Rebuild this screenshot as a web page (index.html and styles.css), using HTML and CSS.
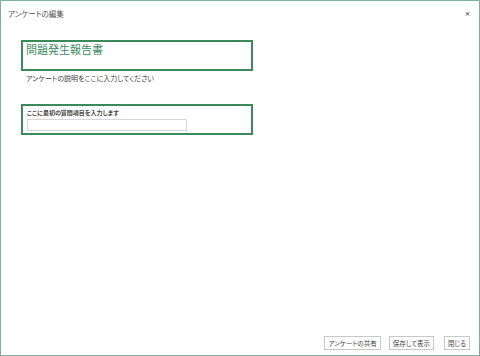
FILE: index.html
```html
<!DOCTYPE html>
<html lang="ja">

<head>
  <meta charset="UTF-8" />
  <title>アンケートの編集</title>
  <link rel="stylesheet" href="styles.css">
</head>

<body>
  <div class="dialog">
    <div class="titlebar">
      <span class="title">アンケートの編集</span>
      <span class="close">&#x2715;</span>
    </div>

    <div class="content">
      <div class="survey-title">問題発生報告書</div>
      <div class="survey-desc">アンケートの説明をここに入力してください</div>

      <div class="question">
        <div class="question-label">ここに最初の質問項目を入力します</div>
        <div class="question-input"></div>
      </div>
    </div>

    <div class="footer">
      <button class="btn">アンケートの共有</button>
      <button class="btn">保存して表示</button>
      <button class="btn">閉じる</button>
    </div>
  </div>
</body>

</html>
```

FILE: styles.css
```css
html, body {
  margin: 0;
  height: 100%;
}

body {
  font-family: "Noto Sans CJK JP", "Noto Sans", sans-serif;
  font-feature-settings: "palt";
  color: #444;
  background: #fff;
}

.dialog {
  box-sizing: border-box;
  width: 480px;
  height: 356px;
  border: 1px solid #7db39a;
  display: flex;
  flex-direction: column;
}

.titlebar {
  display: flex;
  justify-content: space-between;
  align-items: center;
  padding: 5px 9px 0 7px;
  height: 14px;
}

.title {
  font-size: 7.5px;
  color: #555;
}

.close {
  font-size: 6px;
  color: #666;
  font-weight: bold;
}

.content {
  flex: 1;
  padding: 20px 0 0 20px;
}

.survey-title {
  width: 225px;
  height: 27px;
  border: 2px solid #3a8a5c;
  padding: 0 0 0 3px;
  font-size: 11px;
  line-height: 15px;
  color: #3e8b5e;
}

.survey-desc {
  font-size: 7px;
  color: #444;
  padding: 2px 0 0 5px;
  line-height: 10px;
}

.question {
  margin-top: 21px;
  width: 224px;
  height: 27px;
  border: 2px solid #3a8a5c;
  padding: 0 0 0 4px;
}

.question-label {
  font-size: 6px;
  font-weight: bold;
  color: #444;
  line-height: 9px;
  padding-top: 2px;
}

.question-input {
  margin-top: 2px;
  width: 158px;
  height: 10px;
  border: 1px solid #d6d6d6;
}

.footer {
  display: flex;
  justify-content: flex-end;
  align-items: flex-end;
  gap: 8px;
  padding: 0 9px 5px 0;
}

.btn {
  font-family: inherit;
  font-feature-settings: "palt";
  font-size: 6.5px;
  color: #444;
  background: #fff;
  border: 1px solid #c8c8c8;
  height: 14px;
  padding: 0 3px;
  line-height: 12px;
}

.btn + .btn + .btn {
  margin-left: 2px;
}
```
